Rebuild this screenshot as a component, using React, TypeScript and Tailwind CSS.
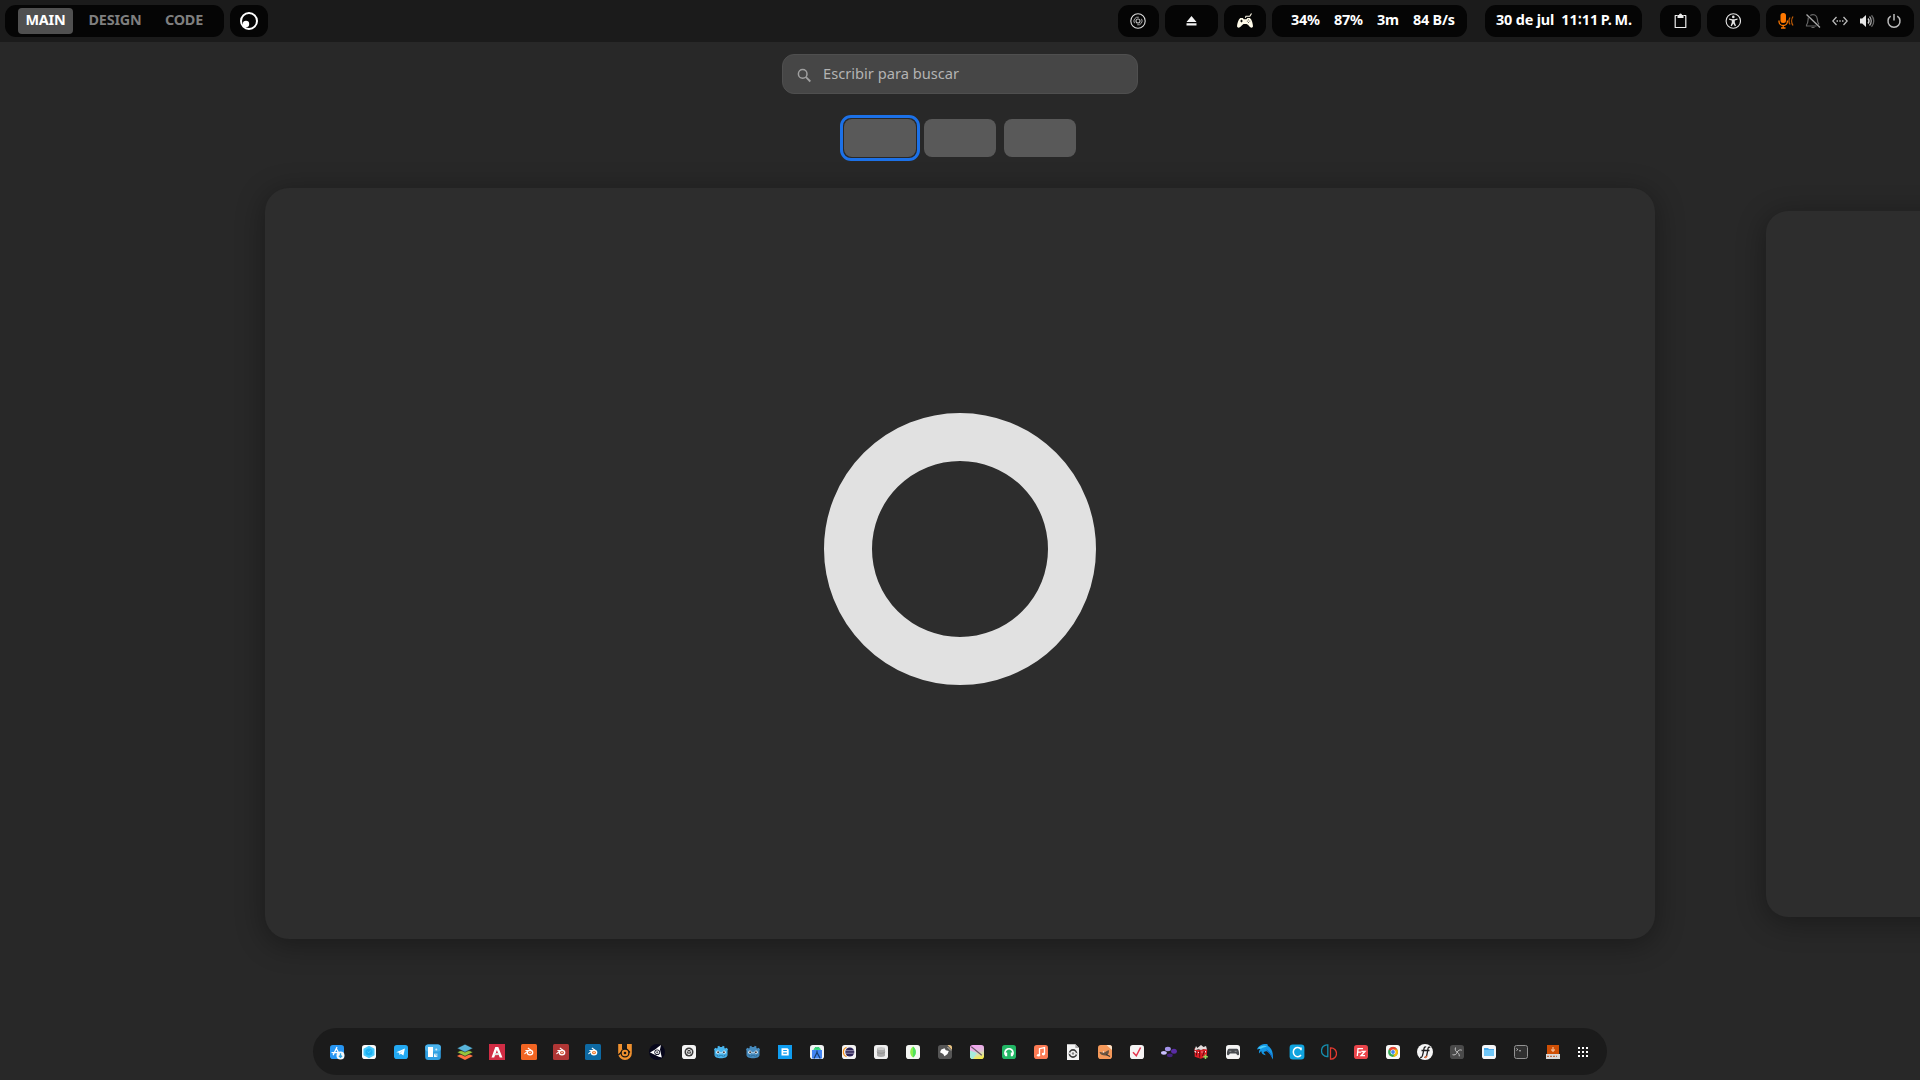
import type { ReactNode } from "react";

function Pill({ className = "", children }: { className?: string; children: ReactNode }) {
  return (
    <div className={`flex h-8 shrink-0 items-center rounded-[11px] bg-[#050505] ${className}`}>{children}</div>
  );
}

function Icon({ children, className = "" }: { children: ReactNode; className?: string }) {
  return (
    <svg viewBox="0 0 16 16" className={`size-4 shrink-0 ${className}`} fill="none">
      {children}
    </svg>
  );
}

function Tile({ fill }: { fill: string }) {
  return <rect x="1" y="1" width="14" height="14" rx="2.8" fill={fill} />;
}

function BlenderMark({ eye }: { eye: string }) {
  return (
    <>
      <path d="M3.8 9.6 7.500 6.500H4.800M7.200 4.200l3.600 2.500" stroke="#fff" strokeWidth="1.1" strokeLinecap="round" />
      <ellipse cx="9" cy="8.600" rx="2.700" ry="2.200" fill={eye} stroke="#fff" strokeWidth="1.300" />
      <circle cx="9" cy="8.500" r="0.700" fill="#fff" />
    </>
  );
}

function Godot({ body }: { body: string }) {
  return (
    <>
      <path
        d="M1 5.200 2.400 3.800l1.500.6.800-.4-.2-1.600 1.700-.6.800 1.300h2l.8-1.300 1.700.6-.2 1.600.8.400 1.500-.6L15 5.200l-.5 1.500V11c0 2-2.800 3.300-6.500 3.300S1.500 13 1.500 11V6.700z"
        fill={body}
      />
      <circle cx="4.900" cy="8.200" r="1.600" fill="#f4faff" />
      <circle cx="11.100" cy="8.200" r="1.600" fill="#f4faff" />
      <circle cx="5.100" cy="8.300" r="1" fill="#414042" />
      <circle cx="10.900" cy="8.300" r="1" fill="#414042" />
      <path d="M8 8v1.500" stroke="#f4faff" strokeWidth="1" />
      <path d="M2.200 11h2.300v1.200h2.200v-.8h2.600v.8h2.200V11h2.300" stroke="#235a80" strokeWidth="0.500" />
    </>
  );
}

const dockIcons: ReactNode[] = [
  <>
    <Tile fill="#2796f3" />
    <path d="M7.800 3.500 4.300 10.700M7.300 4.500l3 5.500M3 8.600h7.500" stroke="#fff" strokeWidth="1.300" strokeLinecap="round" />
    <circle cx="11.500" cy="11.500" r="4" fill="#f3f8fc" />
    <path d="M11.500 9.200v4M9.900 11.700l1.600 1.700 1.600-1.700" stroke="#2aa7e8" strokeWidth="1.300" />
  </>,
  <>
    <Tile fill="#fafafa" />
    <path d="m8 1.700 5.500 3.100v6.400L8 14.300l-5.500-3.100V4.800z" fill="#45c8fb" />
    <circle cx="8" cy="8" r="3.600" fill="#1db0f2" />
    <path d="m6.500 7.600 1.300 1.200 2-2.300" stroke="#56cdfb" strokeWidth="0.900" />
  </>,
  <>
    <Tile fill="#23a9f2" />
    <path d="m3.300 8.300 8.600-3.700-1.500 7-2.600-1.900-1.300 1.300-.3-2.300z" fill="#fff" />
    <path d="m6.300 8.700 4.200-2.800-3.200 3.500" fill="#bfe3f8" />
  </>,
  <>
    <rect x="0.200" y="0.500" width="15.600" height="15.500" rx="3" fill="#2f9fe2" />
    <rect x="0.200" y="0.500" width="15.600" height="7" rx="3" fill="#4bb4ee" />
    <rect x="3" y="3" width="5" height="10" fill="#fff" />
    <path d="M9 13V9.500l3.500 3.500z" fill="#f2f8fb" />
    <path d="M9 9.500h3.500V13" fill="#9fd3f0" />
    <circle cx="11.300" cy="5.500" r="1" fill="#d9effa" />
  </>,
  <>
    <path d="m0 12 8 4 8-4-3-1.500H3z" fill="#fe7141" />
    <path d="m0 8.300 8 4 8-4-3-1.600H3z" fill="#95c53d" stroke="#1b1b1b" strokeWidth="0.600" />
    <path d="m0 4.200 8-4 8 4-8 4z" fill="#58b4da" stroke="#1b1b1b" strokeWidth="0.500" />
  </>,
  <>
    <rect width="16" height="16" fill="#d12c44" />
    <path d="M2.500 13.500 6.300 3h3l4.100 10.500h-2.700L7.900 6l-2.700 7.500z" fill="#fff" />
    <path d="m5.400 9.500 4-.7 1 2.200-4.800.3z" fill="#ddd" />
  </>,
  <>
    <rect width="16" height="16" rx="1.500" fill="#f26522" />
    <BlenderMark eye="#f26522" />
  </>,
  <>
    <rect width="16" height="16" rx="1.500" fill="#b03635" />
    <BlenderMark eye="#d4593b" />
  </>,
  <>
    <rect width="16" height="16" rx="1.500" fill="#0d69a3" />
    <BlenderMark eye="#f5792a" />
  </>,
  <>
    <path d="M1.200 0H5v5h5V0h4.800v9.500a6.800 6.500 0 0 1-13.600 0z" fill="#f0912f" />
    <path d="M1.300 11 6 6.700M8 3.500l5 5" stroke="#151515" strokeWidth="1.300" />
    <circle cx="8" cy="9" r="3.900" fill="#f0912f" stroke="#151515" strokeWidth="1.300" />
    <circle cx="8" cy="9" r="1.300" fill="#151515" />
  </>,
  <>
    <circle cx="8" cy="8" r="8" fill="#06061a" />
    <path d="M.8 8.300C4 7.500 7 4.500 12 1l-1 4.500 1.800 8C9 13 4.500 10 .8 8.300z" fill="#fff" />
    <circle cx="8.200" cy="8.300" r="2.800" fill="#06061a" />
    <circle cx="8.200" cy="8.300" r="2" fill="#fff" />
    <circle cx="8.200" cy="8.300" r="1.100" fill="#56585f" />
  </>,
  <>
    <Tile fill="#f4f4f4" />
    <circle cx="8" cy="8" r="4.500" fill="#3d3d3d" />
    <path d="m8 5.200 2.400 1.400v2.800L8 10.800 5.600 9.400V6.600z" stroke="#f4f4f4" strokeWidth="0.900" />
    <path d="M8 8v3M8 8 5.500 6.500M8 8l2.500-1.500" stroke="#f4f4f4" strokeWidth="0.700" />
  </>,
  <Godot body="#49b5ed" />,
  <Godot body="#478cbf" />,
  <>
    <rect x="1" y="1" width="14" height="14" fill="#0f9df0" />
    <path d="M4.500 4.200h6l1.200 1.200v6H4.500z" fill="#fff" />
    <path d="M6.200 6.500h3.700M6.200 9.200h3.700" stroke="#0f9df0" strokeWidth="1.200" />
  </>,
  <>
    <Tile fill="#f1f3f5" />
    <path d="M4.500 6.500a3.700 3.500 0 0 1 7.400 0z" fill="#3ddc84" />
    <path d="M3 6h10v8.500H3z" fill="#4285f4" />
    <path d="M8 6.500v2M8 8.500l-3 6M8 8.500l3.200 6" stroke="#173e70" strokeWidth="1.200" />
    <path d="m6 3.200 2 1.300 2-1.300" stroke="#2bb46b" strokeWidth="0.700" />
  </>,
  <>
    <Tile fill="#f4f4f4" />
    <path d="M5.500 3.300a5.100 5.100 0 0 0 0 9.400" stroke="#f7941e" strokeWidth="1.200" />
    <circle cx="8.800" cy="8" r="4.500" fill="#2c2255" />
    <path d="M4.200 6.700h9.200M4 9.200h9.400" stroke="#c9c4da" strokeWidth="0.700" />
  </>,
  <>
    <Tile fill="#f0f0f0" />
    <path d="M4 4.500h8v6.800a4 1.700 0 0 1-8 0z" fill="#aaa" />
    <path d="M4 7.800a4 1.500 0 0 0 8 0" stroke="#8a8a8a" strokeWidth="0.700" />
    <ellipse cx="8" cy="4.500" rx="4" ry="1.500" fill="#c9c9c9" />
  </>,
  <>
    <Tile fill="#f5f7f4" />
    <path d="M8 2.500c4 3.500 3.500 8.300 0 11-3.500-2.700-4-7.500 0-11z" fill="#8cf04b" />
    <path d="M8 2.500c4 3.500 3.500 8.300 0 11z" fill="#4fe060" />
  </>,
  <>
    <Tile fill="#555" />
    <path d="m7.500 4.200 1.300 2 3 .8-1.300 3-3 2.200-1.300-2.200-3.200-1.700 1.300-2.800z" fill="#fff" />
    <path d="M10.500 1h1.700A2.800 2.800 0 0 1 15 3.800V6z" fill="#ecc584" />
    <path d="m10.500 3 3.500 3.500" stroke="#f8eed8" strokeWidth="0.700" />
  </>,
  <>
    <defs>
      <linearGradient id="krita" x1="5" y1="1" x2="9" y2="15" gradientUnits="userSpaceOnUse">
        <stop stopColor="#f5a3f3" />
        <stop offset="0.450" stopColor="#e2b9dc" />
        <stop offset="0.700" stopColor="#dbe0b0" />
        <stop offset="1" stopColor="#f4e84c" />
      </linearGradient>
    </defs>
    <rect x="1" y="1" width="14" height="14" rx="2.800" fill="url(#krita)" />
    <path d="M1 6.500 8 9l-4 6h-.200A2.800 2.800 0 0 1 1 12.200z" fill="#a6ebdc" />
    <path d="m2.300 2.800 10.500 8.500" stroke="#6b5a68" strokeWidth="1.100" />
  </>,
  <>
    <Tile fill="#22b765" />
    <path d="M5 11.500a4 4 0 1 1 6 0" stroke="#fff" strokeWidth="1.800" />
    <path d="M3.700 8.500h2.500v3.700H4.300zM9.800 8.500h2.500l-.6 3.700H9.800z" fill="#fff" />
  </>,
  <>
    <Tile fill="#fc7b54" />
    <path d="M6.500 11V4.700l5-1.200V10" stroke="#fff" strokeWidth="1.300" />
    <ellipse cx="5.500" cy="11.200" rx="1.600" ry="1.300" fill="#fff" />
    <ellipse cx="10.400" cy="10.100" rx="1.600" ry="1.300" fill="#fff" />
  </>,
  <>
    <path d="M2 .2h8.500L14 4v12H2z" fill="#f4f4f4" />
    <path d="M10.300.2V4H14z" fill="#aaa" />
    <circle cx="8" cy="9.500" r="3.600" stroke="#3c3c3c" strokeWidth="1.600" />
    <path d="m3.500 8.500 2 1.500M12.500 10.500l-2-1.500" stroke="#f4f4f4" strokeWidth="1.200" />
    <circle cx="8" cy="9.500" r="1.200" fill="#888" />
  </>,
  <>
    <Tile fill="#f5995a" />
    <path d="M2.500 8.200c1-.6 1.800 0 3 .3 1.500.3 3-.9 6.300-2.600.4 2 0 5.600-3.600 5.600-2.700 0-5-1-5.700-3.300z" fill="#6b5441" />
    <circle cx="6.500" cy="8" r="0.700" fill="#eee" />
    <path d="M9 10.500 13 12.500" stroke="#38332f" strokeWidth="1.100" />
    <path d="M9.500 1h2.700A2.800 2.800 0 0 1 15 3.800V6z" fill="#f9e3cb" />
  </>,
  <>
    <Tile fill="#f6f4f4" />
    <path d="m4 8.300 3.300 3.500 4.300-8.300" stroke="#e5354e" strokeWidth="1.500" />
  </>,
  <>
    <ellipse cx="6.900" cy="5" rx="3" ry="2.200" fill="#a393ea" />
    <ellipse cx="2.900" cy="8.800" rx="2.900" ry="1.900" fill="#cabfff" />
    <ellipse cx="13" cy="7.300" rx="2.900" ry="2.500" fill="#5a2ca5" />
    <ellipse cx="8.800" cy="11.300" rx="2.900" ry="1.900" fill="#44237f" />
  </>,
  <>
    <path d="M1.500 4 4 6l8-1 2.300.5-.6 7-6 2.200-6-2z" fill="#db1f26" />
    <path d="m3 2 1.300 2L8 1l2.500 2L13 2l1 3.500-3.500-.5L8 6 5.700 5.300 1.500 6.300z" fill="#e5dcdc" />
    <path d="M3.500 7v4.500M6.700 6.500v7M11.500 7l-2 5" stroke="#650b13" strokeWidth="1" />
    <path d="M1.500 7.500h1.300v1.300M5 8.500h1M8.500 8h1M12.500 7v1.500" stroke="#fff" strokeWidth="0.900" />
    <path d="M12.500 10.500V15M10.300 12.700h4.500" stroke="#94d65b" strokeWidth="1.500" />
  </>,
  <>
    <Tile fill="#f5f5f5" />
    <path d="M4 4.800h8c1.500.2 2.200 3.200 2.100 5.500-.2 1.500-2 1.300-3-.8H5c-1 2.100-2.900 2.300-3 .8-.2-2.300.5-5.300 2-5.500z" fill="#4a4d51" />
    <path d="M4.300 7.300h2M9.700 7.300h2" stroke="#9ea1a5" strokeWidth="0.800" />
  </>,
  <>
    <path d="M0 5.500C1 1.800 5.500-.300 10.300.1L11 2c3.500 2 5.600 6.500 4.800 13.500C14.500 12.500 12.500 9 9.800 7.300c-1-.200-2.300.200-3.200.900l2.200 3C6 11 4.500 9.500 4.200 7L2 9.500C1.800 7.500 2.300 6 3.300 5 2 4.800 1 5 0 5.500z" fill="#1598e6" />
    <path d="M1 4.300C3.500 1.700 7.500 1 10 2.500c-2 1-5 1-6 2.200z" fill="#4fd0f8" />
    <path d="M9.500 6c2.500 1.500 4.500 4 5.500 7" stroke="#1456bc" strokeWidth="0.900" />
  </>,
  <>
    <rect x="0.600" y="0.600" width="14.800" height="14.800" rx="3.200" fill="#10a4df" />
    <path d="M12 5.200A4.300 4.700 0 1 0 12 11M12 3.500v2.700" stroke="#fff" strokeWidth="1.500" />
  </>,
  <>
    <path d="M6.800.800v11.700H6A5.500 5.850 0 0 1 6 .8z" stroke="#168eae" strokeWidth="1.300" />
    <path d="M9.500 3.800v11.400h.5a5.500 5.700 0 0 0 0-11.400z" stroke="#e33a30" strokeWidth="1.300" />
  </>,
  <>
    <Tile fill="#ea454b" />
    <path d="M4.300 12 5 4.700h5M4.500 8.200H8M8.300 7.500h3.700L8 11.700h4" stroke="#fff" strokeWidth="1.300" />
  </>,
  <>
    <Tile fill="#f8f8f8" />
    <circle cx="8" cy="8" r="4.900" fill="#34a853" />
    <path d="M8 8 3.700 5.500a4.900 4.900 0 0 1 8.700 0z" fill="#ea4335" />
    <path d="M8 5.500h4.300A4.900 4.900 0 0 1 8 12.900L10.200 9z" fill="#fbbc05" />
    <circle cx="8" cy="8" r="2.500" fill="#fff" />
    <circle cx="8" cy="8" r="1.900" fill="#4285f4" />
  </>,
  <>
    <circle cx="8" cy="8" r="8" fill="#f6f6f6" />
    <path d="M3.200 13.200c2 .8 2.500-1.500 3.800-8.500C7.300 3 8.300 2.500 9 3.300M7.500 13.200c2 .8 2.300-1.500 3.500-8.500.3-1.800 1.500-2 2-1M4.500 6.500h8" stroke="#1f1f1f" strokeWidth="1.300" />
    <path d="m7.800 14 2.300-2" stroke="#ec6b35" strokeWidth="1.500" />
  </>,
  <>
    <Tile fill="#4a4a4a" />
    <path d="M6.500 3.500c-.7 2.300 0 3.900 1.700 4.600M12.800 6.200C11 5.500 9.300 6 8.200 8.100M3.500 10.700c1.700.7 4.300-.2 4.700-2.600.7.800 2.300 1.500 2.100 4.200" stroke="#c5c5c5" strokeWidth="1" />
  </>,
  <>
    <Tile fill="#f4f6f8" />
    <path d="M3 4h4l1 1h5v7H3z" fill="#46a9ea" />
    <path d="M3 6h10v6H3z" fill="#70c7f8" />
  </>,
  <>
    <rect x="1.500" y="1.500" width="13" height="13" rx="2" fill="#303030" stroke="#929292" />
    <path d="m3.500 4.500 1.300 1-1.300 1M6 6.800h2" stroke="#ddd" strokeWidth="0.800" />
  </>,
  <>
    <path d="M2 1h12v10H2z" fill="#cf4f05" />
    <path d="M8 3v3.500M6.300 5.500 8 7.300l1.700-1.800" stroke="#f5b78e" strokeWidth="1.200" />
    <rect x="1" y="10" width="14" height="5" fill="#d8d8d8" />
    <path d="M2 12.300h10" stroke="#b5562a" strokeWidth="1" strokeDasharray="2 1" />
  </>,
  <>
    {[3, 7, 11].map((y) =>
      [1, 5, 9].map((x) => <rect key={`${x}-${y}`} x={x} y={y} width="2" height="2" fill="#fff" />),
    )}
  </>,
];

function TopBar() {
  return (
    <header className="flex h-[42px] w-full shrink-0 items-start justify-between bg-[#1b1b1b] pt-[5px] pr-[6px] pl-[5px] text-[14.4px] leading-[22px] font-bold tracking-[-0.2px] whitespace-nowrap text-white">
      <div className="flex gap-[6px]">
        <Pill className="w-[219px] pl-[13px] text-[#7f7f7f]">
          <span className="flex h-[26px] w-[55px] items-center justify-center rounded bg-[#505050] text-white">
            <span className="pb-0.5">MAIN</span>
          </span>
          <span className="w-[84px] pb-0.5 text-center">DESIGN</span>
          <span className="w-[54px] pb-0.5 text-center">CODE</span>
        </Pill>
        <Pill className="w-[38px] justify-center">
          <svg viewBox="0 0 18 18" className="size-[18px]" fill="none">
            <circle cx="9" cy="9" r="8" stroke="#fff" strokeWidth="2" />
            <circle cx="6" cy="12" r="3.200" fill="#fff" />
          </svg>
        </Pill>
      </div>
      <div className="flex">
        <Pill className="mr-[6px] w-[41px] pl-3">
          <Icon>
            <circle cx="8" cy="8" r="7.200" stroke="#ddd" strokeWidth="1.100" />
            <path d="M4.500 10.200A4 4 0 0 1 8.800 4.200M11.500 5.800a4 4 0 0 1-4.300 6" stroke="#aaa" />
            <circle cx="8" cy="8" r="2" stroke="#bbb" strokeWidth="1.100" />
          </Icon>
        </Pill>
        <Pill className="mr-[6px] w-[53px] pl-[18px]">
          <Icon>
            <path d="m8.500 3 5 6h-10zM3.500 10.300h10v2.200h-10z" fill="#f4f4f4" />
          </Icon>
        </Pill>
        <Pill className="mr-[6px] w-[42px] justify-center">
          <Icon>
            <path d="M8.300 4.800 9 3.300h3.800L14.500.5" stroke="#fffbe9" strokeWidth="1.100" />
            <path d="M3.300 5h2.500l1 1.200h2.600l1-1.200h2.500c2 1.600 3 5.800 3.100 8.200-.4 2.100-2.500 2.200-5-1.400L9.500 11h-3L5 12.300c-2.300 3-4.500 3-5 1C.2 10.500 1.300 6.600 3.300 5z" fill="#fffbe9" />
            <path d="M4.500 6.700v2.600M3.200 8h2.600" stroke="#050505" strokeWidth="0.900" />
            <path d="M11.200 6.500h.8v.8h-.8zM11.200 9h.8v.8h-.8zM9.900 7.700h.8v.8h-.8zM12.400 7.700h.8v.8h-.8z" fill="#050505" />
          </Icon>
        </Pill>
        <Pill className="mr-[18px] w-[195px] gap-[14.5px] pb-0.5 pl-[19px]">
          <span className="w-[28.500px]">34%</span>
          <span className="w-[28.500px]">87%</span>
          <span className="w-[21.500px]">3m</span>
          <span>84 B/s</span>
        </Pill>
        <Pill className="mr-[18px] w-[157px] justify-between pr-[10px] pb-0.5 pl-[11px]">
          <span className="tracking-[-0.15px]">30 de jul</span>
          <span className="tracking-normal [word-spacing:-1.2px]">11∶11 P. M.</span>
        </Pill>
        <Pill className="mr-[6px] w-[41px] pl-3">
          <Icon>
            <path d="M5.500 2.500H3.200v12h10.600v-12h-2.300" stroke="#eee" strokeWidth="1.200" strokeLinejoin="round" />
            <path d="M5.500 2H7a1.500 1.500 0 0 1 3 0h1.500v3h-6z" fill="#eee" />
          </Icon>
        </Pill>
        <Pill className="mr-[6px] w-[53px] pl-[18px]">
          <Icon>
            <circle cx="8.300" cy="8" r="7.200" stroke="#e4e4e4" strokeWidth="1.100" />
            <circle cx="8.300" cy="3.900" r="1.300" fill="#e4e4e4" />
            <path d="m4.100 5.500 3 .8h2.400l3-.8v1.200l-2.700.9v2l1.200 3.200-1.100.5-1.600-2.800-1.600 2.800-1.100-.5 1.200-3.200v-2l-2.700-.9z" fill="#e4e4e4" />
          </Icon>
        </Pill>
        <Pill className="w-[148px] gap-[11px] pl-[12px]">
          <Icon>
            <rect x="2.500" y="0" width="5.500" height="10" rx="2.500" fill="#ff7800" />
            <path d="M1 7.500v1a4.200 4 0 0 0 8.400 0v-1M5.200 12.500V15M3 15h4.500" stroke="#ff7800" strokeWidth="1.300" />
            <path d="M12 4.500c-1.200 2-1.200 5 0 7M15 3.500c-1.700 2.500-1.700 6.500 0 9" stroke="#c25d06" strokeWidth="1.300" />
          </Icon>
          <Icon>
            <path d="M3.300 4.500c-.3 3.500-.2 5.500-1.800 7.500v1h10M5.300 2.500c3-2.200 6.700-.300 7 3.500.1 2.500.4 4 1.700 5.500M6.500 14.500h3" stroke="#666" strokeWidth="1.200" />
            <path d="m1.500 1.500 13.500 13" stroke="#aaa" strokeWidth="1.300" />
          </Icon>
          <Icon>
            <path d="M4.500 4 .8 8l3.700 4M11.500 4l3.700 4-3.700 4M4.500 8h1.500M7.300 8h1.400M10 8h1.500" stroke="#bdbdbd" strokeWidth="1.300" />
          </Icon>
          <Icon>
            <path d="M1 5.500h2.200L7 2v12L3.200 10.500H1z" fill="#e6e6e6" />
            <path d="M9 5.500c1.300 1.500 1.300 3.500 0 5" stroke="#d5d5d5" strokeWidth="1.300" />
            <path d="M10.500 3.500c2.300 2.500 2.300 6.500 0 9" stroke="#aaa" strokeWidth="1.300" />
            <path d="M12.500 2.200c3 3.300 3 8.300 0 11.600" stroke="#666" strokeWidth="1.300" />
          </Icon>
          <Icon>
            <path d="M4.700 3.200a6 6 0 1 0 6.600 0M8 1v6.500" stroke="#bbb" strokeWidth="1.500" />
          </Icon>
        </Pill>
      </div>
    </header>
  );
}

function WorkspaceThumbs() {
  return (
    <div className="mt-[25px] flex gap-2 self-center">
      <div className="relative h-[38px] w-[72px] rounded-lg bg-[#595959]">
        <div className="absolute -inset-1 rounded-[11px] border-[3px] border-[#1c71e8]" />
      </div>
      <div className="h-[38px] w-[72px] rounded-lg bg-[#595959]" />
      <div className="h-[38px] w-[72px] rounded-lg bg-[#595959]" />
    </div>
  );
}

export default function App() {
  return (
    <div className="flex h-[1080px] w-[1920px] flex-col overflow-hidden bg-[#282828] font-['Noto_Sans',sans-serif]">
      <TopBar />
      <div className="mt-3 flex h-10 w-[356px] shrink-0 items-center self-center rounded-xl border border-[#4f4f4f] bg-[#464646] pl-[14px]">
        <svg viewBox="0 0 16 16" className="mt-[3px] size-4 shrink-0" fill="none">
          <circle cx="5.700" cy="5.900" r="4.300" stroke="#a0a0a0" strokeWidth="1.500" />
          <path d="m9 9.200 4.300 4.300" stroke="#a0a0a0" strokeWidth="1.800" />
        </svg>
        <span className="ml-[10px] pb-0.5 text-[14.67px] text-[#b3b3b3]">Escribir para buscar</span>
      </div>
      <WorkspaceThumbs />
      <main className="mt-[31px] flex h-[751px] shrink-0 items-center pl-[265px]">
        <div className="flex h-[751px] w-[1390px] shrink-0 items-center justify-center rounded-[24px] bg-[#2d2d2d] pb-[30px] shadow-[0_5px_28px_2px_rgba(0,0,0,0.32)]">
          <div className="size-[272px] rounded-full border-[48px] border-[#e1e1e1]" />
        </div>
        <div className="ml-[111px] h-[706px] w-[1307px] shrink-0 rounded-[22px] bg-[#2d2d2d] shadow-[0_5px_28px_2px_rgba(0,0,0,0.32)]" />
      </main>
      <nav className="mt-[89px] flex h-[47px] w-[1294px] shrink-0 self-center rounded-full bg-[#1b1b1b] pt-4 pl-2">
        {dockIcons.map((icon, i) => (
          <div key={i} className="flex w-8 shrink-0 justify-center">
            <Icon>{icon}</Icon>
          </div>
        ))}
      </nav>
    </div>
  );
}
